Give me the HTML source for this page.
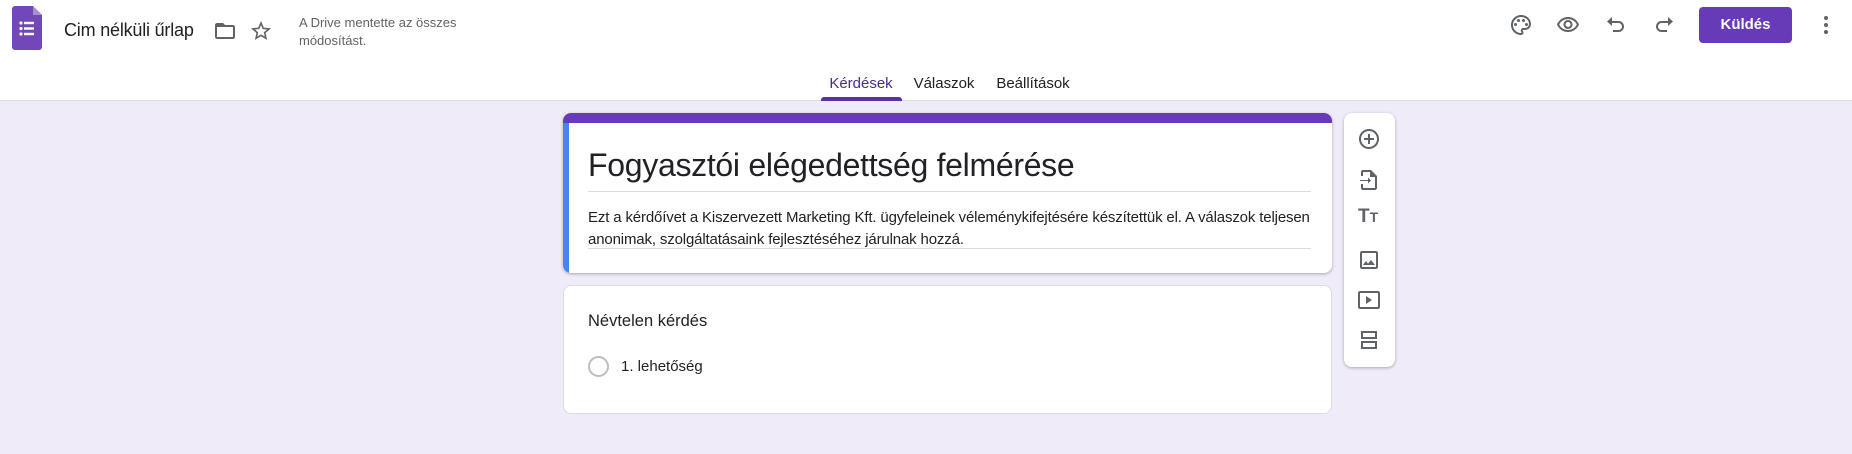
<!DOCTYPE html><html><head><meta charset="utf-8"><style>
*{margin:0;padding:0;box-sizing:border-box}
body{width:1852px;height:454px;background:#f0ebf8;font-family:"Liberation Sans",sans-serif;position:relative;overflow:hidden;color:#202124}
.hdr{position:absolute;left:0;top:0;width:1852px;height:101px;background:#fff;border-bottom:1px solid #dadce0}
.a{position:absolute}
.ic{position:absolute;width:24px;height:24px;fill:#5f6368}
.tab{position:absolute;top:75px;font-size:15px;color:#202124;transform:translateX(-50%)}
.card{position:absolute;left:563px;width:769px;background:#fff;border:1px solid #dadce0;border-radius:8px}
</style></head><body>
<div class="hdr">
<svg class="a" style="left:12px;top:6px" width="30" height="44" viewBox="0 0 30 44"><path d="M3 0h18l9 9v32a3 3 0 0 1-3 3H3a3 3 0 0 1-3-3V3a3 3 0 0 1 3-3z" fill="#7248b9"/><path d="M21 0v9h9z" fill="#a591d2"/><g fill="#fff"><circle cx="9" cy="17" r="1.6"/><circle cx="9" cy="22.5" r="1.6"/><circle cx="9" cy="28" r="1.6"/><rect x="12" y="15.8" width="10" height="2.4"/><rect x="12" y="21.3" width="10" height="2.4"/><rect x="12" y="26.8" width="10" height="2.4"/></g></svg>
<div class="a" style="left:64px;top:20px;font-size:18px;letter-spacing:-0.2px">Cim nélküli űrlap</div>
<svg class="ic" style="left:213px;top:19px" viewBox="0 0 24 24"><path d="M20 6h-8l-2-2H4c-1.1 0-2 .9-2 2v12c0 1.1.9 2 2 2h16c1.1 0 2-.9 2-2V8c0-1.1-.9-2-2-2zm0 12H4V8h16v10z"/></svg>
<svg class="ic" style="left:249px;top:19px" viewBox="0 0 24 24"><path d="M22 9.24l-7.19-.62L12 2 9.19 8.63 2 9.24l5.46 4.73L5.82 21 12 17.27 18.18 21l-1.63-7.03L22 9.24zM12 15.4l-3.76 2.27 1-4.28-3.32-2.88 4.38-.38L12 6.1l1.71 4.04 4.38.38-3.32 2.88 1 4.28L12 15.4z"/></svg>
<div class="a" style="left:299px;top:14px;font-size:13px;line-height:18px;color:#5f6368">A Drive mentette az összes<br>módosítást.</div>
<svg class="ic" style="left:1509px;top:13px" viewBox="0 0 24 24"><path d="M12 22C6.490 22 2 17.51 2 12S6.49 2 12 2s10 4.04 10 9c0 3.31-2.69 6-6 6h-1.77c-.28 0-.5.22-.5.5 0 .12.05.23.13.33.41.47.64 1.06.64 1.67A2.5 2.5 0 0 1 12 22zm0-18c-4.41 0-8 3.59-8 8s3.59 8 8 8c.28 0 .5-.22.5-.5a.54.54 0 0 0-.14-.35c-.41-.46-.63-1.05-.63-1.65a2.5 2.5 0 0 1 2.5-2.5H16c2.21 0 4-1.790 4-4 0-3.86-3.59-7-8-7z"/><circle cx="6.5" cy="11.5" r="1.5"/><circle cx="9.5" cy="7.5" r="1.5"/><circle cx="14.5" cy="7.5" r="1.5"/><circle cx="17.5" cy="11.5" r="1.5"/></svg>
<svg class="ic" style="left:1556px;top:13px" viewBox="0 0 24 24"><path d="M12 6a9.77 9.77 0 0 1 8.82 5.5C19.17 14.87 15.79 17 12 17s-7.17-2.13-8.82-5.5A9.77 9.77 0 0 1 12 6m0-2C7 4 2.73 7.11 1 11.5 2.73 15.89 7 19 12 19s9.27-3.11 11-7.5C21.27 7.11 17 4 12 4zm0 5a2.5 2.5 0 0 1 0 5 2.5 2.5 0 0 1 0-5m0-2c-2.48 0-4.5 2.020-4.5 4.5S9.52 16 12 16s4.5-2.02 4.5-4.5S14.48 7 12 7z"/></svg>
<svg class="ic" style="left:1604px;top:13px" viewBox="0 0 24 24"><path d="M8 7V4L3 8.5 8 13v-3h6.5a3.5 3.5 0 0 1 0 7H9v2h5.5a5.5 5.5 0 0 0 0-11H8z"/></svg>
<svg class="ic" style="left:1652px;top:13px" viewBox="0 0 24 24"><path d="M16 7V4l5 4.5L16 13v-3H9.5a3.5 3.5 0 0 0 0 7H15v2H9.5a5.5 5.5 0 0 1 0-11H16z"/></svg>
<div class="a" style="left:1699px;top:7px;width:93px;height:36px;background:#673ab7;border-radius:4px;color:#fff;font-weight:bold;font-size:15px;line-height:36px;text-align:center">Küldés</div>
<svg class="ic" style="left:1814px;top:13px" viewBox="0 0 24 24"><circle cx="12" cy="5" r="2"/><circle cx="12" cy="12" r="2"/><circle cx="12" cy="19" r="2"/></svg>
<div class="tab" style="left:861px;color:#4a2a8c">Kérdések</div>
<div class="tab" style="left:944px">Válaszok</div>
<div class="tab" style="left:1033px">Beállítások</div>
<div class="a" style="left:821px;top:97px;width:81px;height:4px;background:#5b2fa5;border-radius:3px 3px 0 0"></div>
</div>
<div class="card" style="top:113px;height:160px;overflow:hidden;border:none;box-shadow:0 1px 3px rgba(0,0,0,.3)">
<div class="a" style="left:0;top:0;width:769px;height:10px;background:#673ab7"></div>
<div class="a" style="left:0;top:10px;width:6px;height:150px;background:#4285f4"></div>
<div class="a" style="left:25px;top:34px;font-size:32px;letter-spacing:-0.3px">Fogyasztói elégedettség felmérése</div>
<div class="a" style="left:25px;top:78px;width:723px;height:1px;background:#dadce0"></div>
<div class="a" style="left:25px;top:94px;width:740px;font-size:15px;line-height:22px;letter-spacing:-0.15px">Ezt a kérdőívet a Kiszervezett Marketing Kft. ügyfeleinek véleménykifejtésére készítettük el. A válaszok teljesen anonimak, szolgáltatásaink fejlesztéséhez járulnak hozzá.</div>
<div class="a" style="left:25px;top:135px;width:723px;height:1px;background:#dadce0"></div>
</div>
<div class="card" style="top:285px;height:129px">
<div class="a" style="left:24px;top:26px;font-size:16.5px">Névtelen kérdés</div>
<div class="a" style="left:24px;top:70px;width:21px;height:21px;border:2px solid #bdbdbd;border-radius:50%"></div>
<div class="a" style="left:57px;top:72px;font-size:15px">1. lehetőség</div>
</div>
<div class="a" style="left:1344px;top:113px;width:51px;height:254px;background:#fff;border-radius:8px;box-shadow:0 1px 3px rgba(0,0,0,.3)">
<svg class="ic" style="left:13px;top:14px" viewBox="0 0 24 24"><path d="M13 7h-2v4H7v2h4v4h2v-4h4v-2h-4V7zm-1-5C6.48 2 2 6.48 2 12s4.48 10 10 10 10-4.48 10-10S17.52 2 12 2zm0 18c-4.41 0-8-3.59-8-8s3.59-8 8-8 8 3.59 8 8-3.59 8-8 8z"/></svg>
<svg class="ic" style="left:13px;top:55px" viewBox="0 0 24 24"><path d="M14 2H6c-1.1 0-2 .9-2 2v4h2V4h7v5h5v11H6v-4H4v4c0 1.1.9 2 2 2h12c1.1 0 2-.9 2-2V8l-6-6zM11 15.5L14 12.5l-3-3V12H3v1h8z" /></svg>
<div class="a" style="left:14px;top:93px;font-size:19px;font-weight:bold;color:#5f6368">T<span style="font-size:14px">T</span></div>
<svg class="ic" style="left:13px;top:135px" viewBox="0 0 24 24"><path d="M19 3H5c-1.1 0-2 .9-2 2v14c0 1.1.9 2 2 2h14c1.1 0 2-.9 2-2V5c0-1.1-.9-2-2-2zm0 16H5V5h14v14zm-5-7l-3 3.72L9 13l-3 4h12l-4-5z"/></svg>
<svg class="ic" style="left:13px;top:175px" viewBox="0 0 24 24"><path d="M21 3H3c-1.1 0-2 .9-2 2v14c0 1.1.9 2 2 2h18c1.1 0 2-.9 2-2V5c0-1.1-.9-2-2-2zm0 16H3V5h18v14zM9 8v8l6-4z"/></svg>
<svg class="ic" style="left:13px;top:215px" viewBox="0 0 24 24"><path d="M4 3h16v8H4zm2 2v4h12V5zM4 13h16v8H4zm2 2v4h12v-4z"/></svg>
</div>
</body></html>
